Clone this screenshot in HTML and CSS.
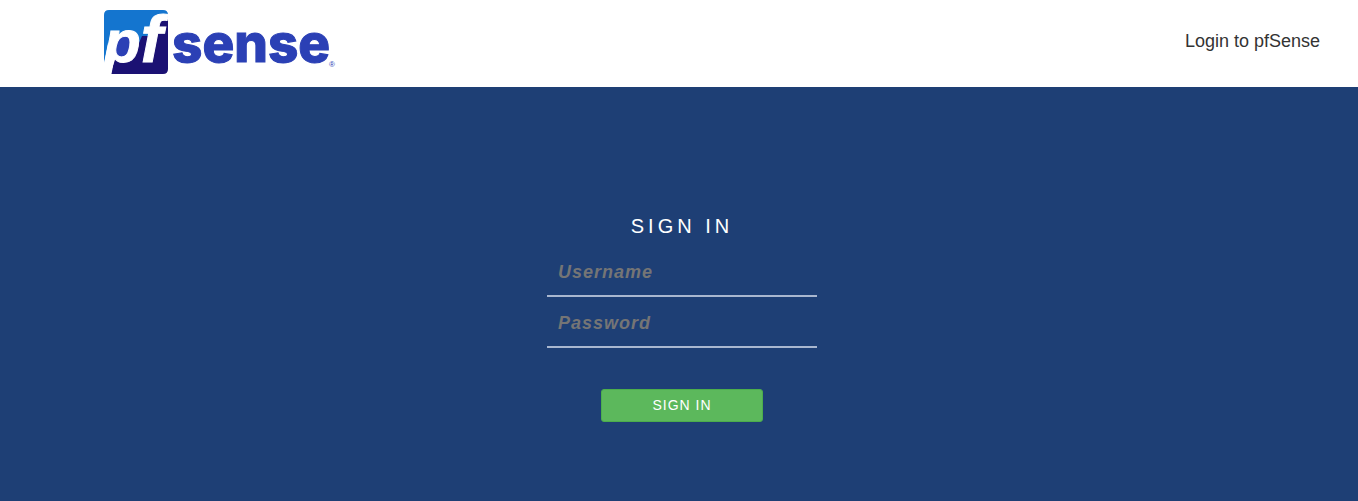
FILE: index.html
```html
<!DOCTYPE html>
<html lang="en">
<head>
<meta charset="utf-8">
<meta name="viewport" content="width=device-width, initial-scale=1">
<title>pfSense - Login</title>
<link rel="stylesheet" href="styles.css">
</head>
<body>
<header class="header">
  <svg class="logo" viewBox="0 0 232 66" role="img" aria-label="pfSense">
    <defs><clipPath id="tile"><path d="M5 1H59Q64 1 64 6V60Q64 65 59 65H0V6Q0 1 5 1Z"/></clipPath></defs>
    <g clip-path="url(#tile)">
      <path class="logo-sky" d="M0 0H65V10L40 65H0Z"/>
      <path class="logo-navy" d="M65 10H56L48 27H38L28 50H10L6 65H65Z"/>
      <ellipse class="logo-blue" cx="21" cy="38" rx="12" ry="11"/>
      <path class="logo-white" d="M0 54L4 34L12 48L6 65H0Z"/>
      <text class="logo-pf" x="0" y="53">p<tspan class="logo-f">f</tspan></text>
    </g>
    <text class="logo-sense" x="68" y="53">sense</text>
    <text class="logo-mark" x="225" y="58">®</text>
  </svg>
  <span class="header-title">Login to pfSense</span>
</header>
<main class="main">
  <form class="login">
    <h1 class="login-title">SIGN IN</h1>
    <input class="field" type="text" name="username" placeholder="Username" aria-label="Username">
    <input class="field" type="password" name="password" placeholder="Password" aria-label="Password">
    <button class="submit" type="submit">SIGN IN</button>
  </form>
</main>
</body>
</html>
```
FILE: styles.css
```css
* { box-sizing: border-box; }
body {
  display: flex;
  flex-direction: column;
  min-height: 100vh;
  margin: 0;
  background: #1e3f75;
  font-family: "Liberation Sans", Arial, sans-serif;
}
.header {
  display: flex;
  align-items: flex-start;
  justify-content: space-between;
  padding: 9px 38px 12px 104px;
  background: #fff;
}
.logo { width: 232px; height: 66px; overflow: visible; }
.logo-sky { fill: #1475cf; }
.logo-navy { fill: #1b1173; }
.logo-blue { fill: #2b40b5; }
.logo-white { fill: #fff; }
.logo-pf { fill: #fff; stroke: #fff; stroke-width: 1px; font: italic bold 60px "Liberation Sans", sans-serif; }
.logo-f { font-size: 66px; }
.logo-sense { fill: #2b40b5; stroke: #2b40b5; stroke-width: 1px; font: 800 53px Inter, sans-serif; }
.logo-mark { fill: #2b40b5; font: 8px "Liberation Sans", sans-serif; }
.header-title { padding-top: 21px; color: #333; font-size: 18px; line-height: 22px; }
.main { flex: 1; padding: 124px 16px 64px 22px; }
.login {
  display: flex;
  flex-direction: column;
  align-items: center;
  width: 100%;
  max-width: 270px;
  margin: 0 auto;
}
.login-title {
  margin: 0 0 8px;
  color: #fff;
  font-size: 20px;
  font-weight: 400;
  line-height: 30px;
  letter-spacing: 4px;
}
.field {
  width: 100%;
  height: 48px;
  margin-bottom: 3px;
  padding: 0 11px;
  border: 0;
  border-bottom: 2px solid #a9b7cf;
  border-radius: 0;
  outline: 0;
  background: transparent;
  color: #fff;
  font: italic bold 18px "Liberation Sans", Arial, sans-serif;
  letter-spacing: 1px;
}
.field::placeholder { color: #757575; opacity: 1; }
.submit {
  width: 162px;
  height: 33px;
  margin-top: 38px;
  padding: 0 0 2px;
  border: 1px solid #4cae4c;
  border-radius: 3px;
  background: #5cb85c;
  color: #fff;
  font: 14px "Liberation Sans", Arial, sans-serif;
  letter-spacing: 1px;
}
```
